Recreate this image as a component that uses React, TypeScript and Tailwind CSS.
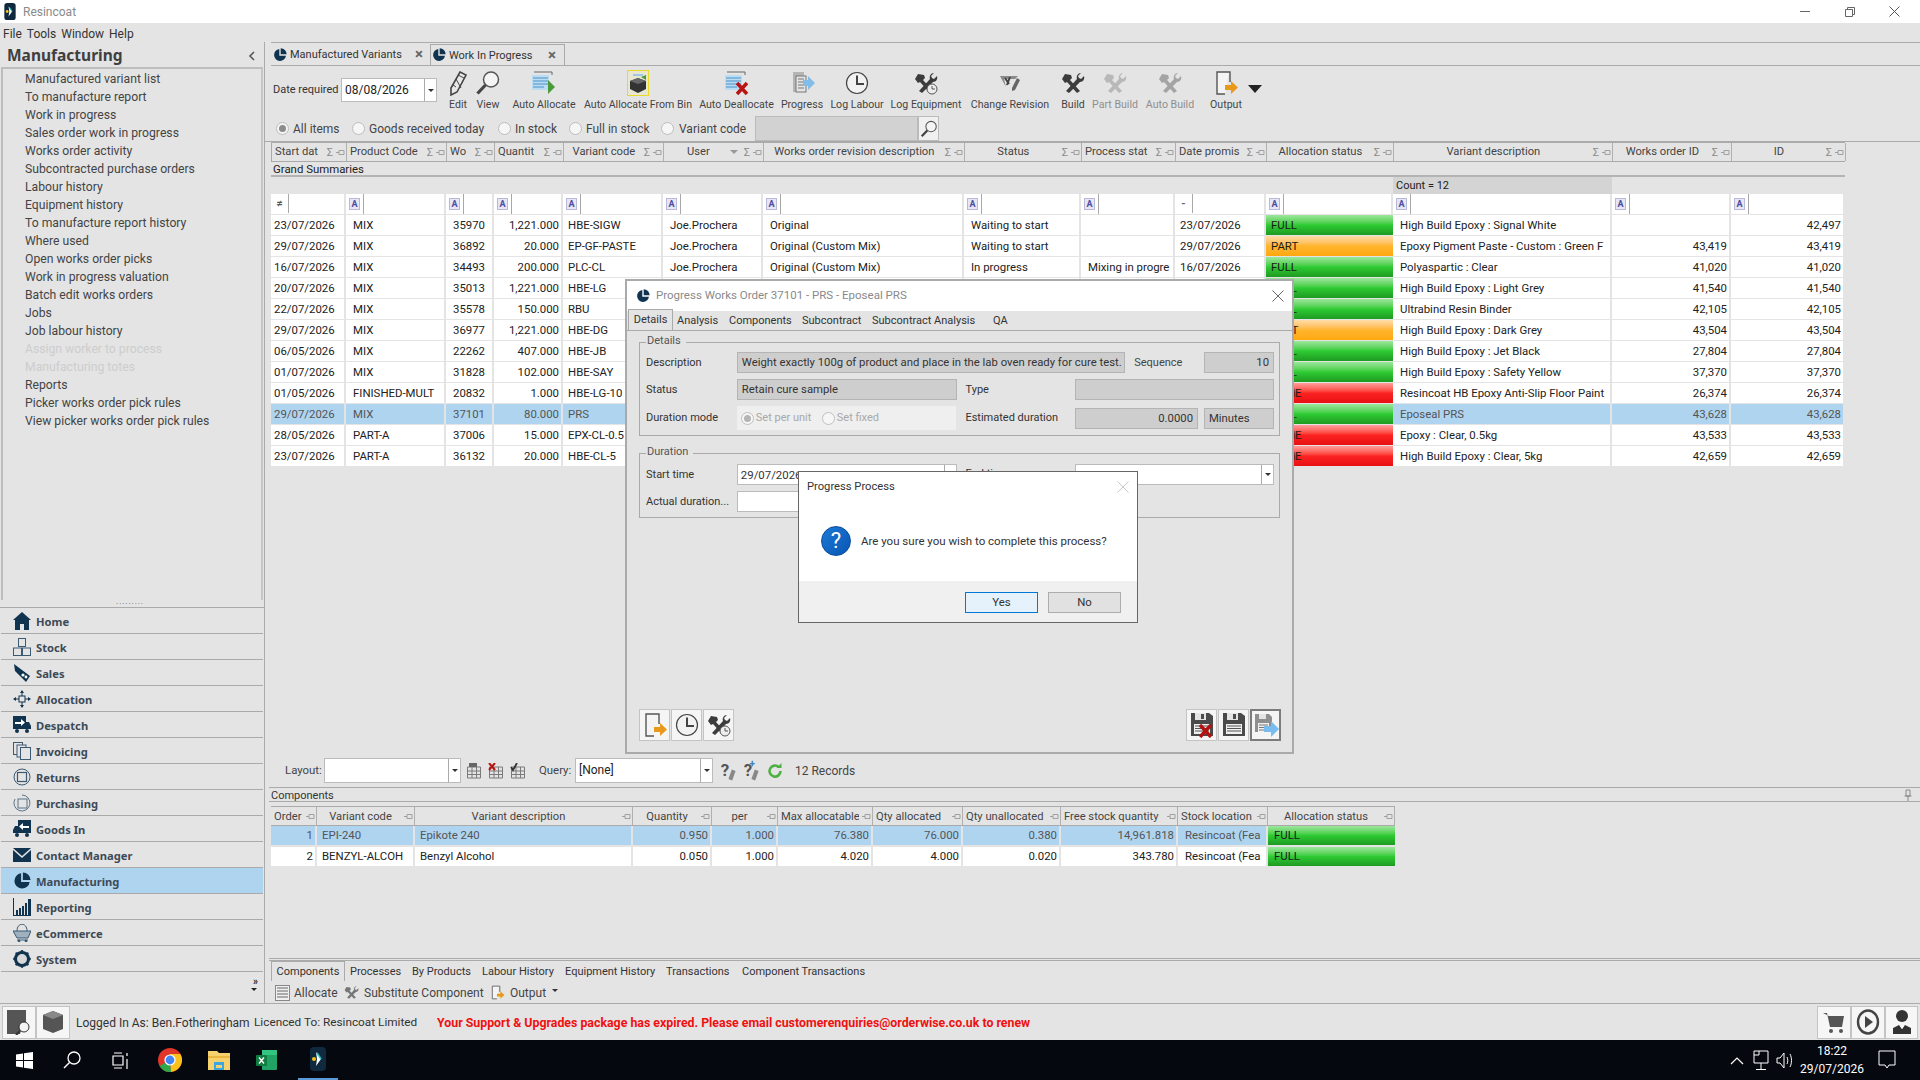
import React from "react";

const NAVY = "#10344f";

const Pie = ({ s = 14 }: { s?: number }) => (
  <svg width={s} height={s} viewBox="0 0 20 20" className="shrink-0">
    <path d="M9 1.5A8.5 8.5 0 1 0 18.5 11H9z" fill={NAVY} />
    <path d="M11 0.5A8.5 8.5 0 0 1 19.5 9H11z" fill={NAVY} />
  </svg>
);

const Sigma = () => <span className="text-[11px] text-[#8a8a8a] leading-none">Σ</span>;
const PinH = () => (
  <svg width="9" height="9" viewBox="0 0 9 9" className="shrink-0">
    <path d="M0 4.5h3M3 2.5h5v4H3z" fill="none" stroke="#a0a0a0" />
  </svg>
);

const FilterA = () => (
  <span className="flex h-[20px] w-[18px] items-center justify-start border-r border-[#a8a8a8] pl-[3px]">
    <span className="flex h-[12px] w-[11px] items-center justify-center border border-[#b8b8d8] bg-[#e6e6f4] text-[9px] font-bold leading-none text-[#4c4ca0]">A</span>
  </span>
);

const HammerWrench = ({ c = "#3c3c3c", s = 24, clock = false }: { c?: string; s?: number; clock?: boolean }) => (
  <svg width={s} height={s} viewBox="0 0 24 24" className="shrink-0">
    <path d="M4 3l6 1 1 3-2 2 10 11-3 2L6 11 4 12 1 8z" fill={c} />
    <path d="M20 2l-3 3 1 2 2 1 3-3c1 3-1 6-4 6L8 22l-3-2L16 8c-1-3 1-6 4-6z" fill={c} />
    {clock && (
      <g>
        <circle cx="18" cy="18" r="5" fill="#eee" stroke="#555" />
        <path d="M18 15v3h3" fill="none" stroke="#555" />
      </g>
    )}
  </svg>
);

const Clock = ({ s = 24 }: { s?: number }) => (
  <svg width={s} height={s} viewBox="0 0 24 24" className="shrink-0">
    <circle cx="12" cy="12" r="10.5" fill="#f2f2f2" stroke="#444" strokeWidth="1.2" />
    <path d="M12 4.5V13h7" fill="none" stroke="#444" strokeWidth="2" />
  </svg>
);

const OutputIcon = ({ s = 26 }: { s?: number }) => (
  <svg width={s} height={s} viewBox="0 0 26 26" className="shrink-0">
    <path d="M16 2H4v22h8" fill="#f4f4f4" stroke="#555" strokeWidth="1.4" />
    <path d="M16 2h1v10" fill="none" stroke="#555" strokeWidth="1.4" />
    <path d="M12 15h6v-4l7 6.5-7 6.5v-4h-6z" fill="#e8991c" />
  </svg>
);

const ListDoc = ({ mark }: { mark: "go" | "x" }) => (
  <svg width="26" height="26" viewBox="0 0 26 26" className="shrink-0">
    <path d="M3 2h18v3" fill="none" stroke="#666" />
    <rect x="1" y="5" width="17" height="15" fill="#bcdcf3" />
    <path d="M2 8h15M2 11h15M2 14h15M2 17h11" stroke="#6fa9d6" strokeWidth="1.3" />
    {mark === "go" ? (
      <path d="M17 10l7 7-7 7z" fill="#4a9a3a" />
    ) : (
      <path d="M13 13l10 11M23 13L13 24" stroke="#b81414" strokeWidth="3.4" />
    )}
  </svg>
);

const Box = () => (
  <span className="flex h-[26px] w-[22px] items-center justify-center border border-[#e9d92b] bg-[#e8e7d2]">
    <svg width="18" height="20" viewBox="0 0 18 20">
      <path d="M9 5l8 3v8l-8 4-8-4V8z" fill="#333" />
      <path d="M9 5l8 3-8 3-8-3z" fill="#666" />
      <path d="M4 1h10v2H4z" fill="#9ec7e6" />
      <path d="M12 4l5-2v5z" fill="#4a9a3a" />
    </svg>
  </span>
);

const ProgressIcon = () => (
  <svg width="26" height="24" viewBox="0 0 26 24" className="shrink-0">
    <path d="M4 1h11v4h-8v16H4z" fill="#b5b5b5" />
    <rect x="7" y="5" width="10" height="16" fill="#e4e4e4" stroke="#777" />
    <path d="M9 8h6M9 11h6M9 14h6M9 17h6" stroke="#777" />
    <path d="M14 9h5V5l7 7-7 7v-4h-5z" fill="#82bdea" />
  </svg>
);

const Pencil = () => (
  <svg width="20" height="26" viewBox="0 0 20 26" className="shrink-0">
    <path d="M12 2l6 3-9 17-6 3 0-7z" fill="#e8e8e8" stroke="#444" strokeWidth="1.6" />
    <path d="M10 5l6 3M8 9l5 9M5 15l3 2" stroke="#444" />
  </svg>
);

const Magnifier = ({ s = 26 }: { s?: number }) => (
  <svg width={s} height={s} viewBox="0 0 26 26" className="shrink-0">
    <circle cx="16" cy="9.5" r="7.5" fill="#f4f4f4" stroke="#555" strokeWidth="1.5" />
    <path d="M10.5 15L2.5 23.5" stroke="#444" strokeWidth="3.2" />
  </svg>
);

const ChangeRev = () => (
  <svg width="24" height="22" viewBox="0 0 24 22" className="shrink-0">
    <path d="M2 4h18l-3 3H6l2 8z" fill="#8a8a8a" />
    <path d="M7 6l4 6M12 5l-3 8" stroke="#444" strokeWidth="2" />
    <path d="M19 6l3 2-5 10-3 1 0-3z" fill="#666" />
  </svg>
);

const Disk = ({ variant }: { variant: "x" | "plain" | "go" }) => (
  <svg width="26" height="26" viewBox="0 0 26 26">
    {variant === "go" ? (
      <g>
        <path d="M2 2h14l3 3v15H2z" fill="#8f8f8f" />
        <rect x="6" y="2" width="7" height="5" fill="#e4e4e4" />
        <rect x="5" y="11" width="11" height="9" fill="#f0f0f0" />
        <path d="M6 13h9M6 15.5h9M6 18h9" stroke="#777" />
        <path d="M11 14h7V9l8 8-8 8v-5h-7z" fill="#79bdf0" />
      </g>
    ) : (
      <g>
        <path d="M2 1h18l4 3v20H2z" fill="#4a4a4a" />
        <rect x="6" y="1" width="11" height="7" fill="#e4e4e4" />
        <rect x="12" y="2" width="3" height="5" fill="#4a4a4a" />
        <rect x="5" y="12" width="16" height="10" fill="#f0f0f0" />
        <path d="M6 14h14M6 16.5h14M6 19h14" stroke="#555" />
        {variant === "x" && <path d="M11 13l11 12M22 13L11 25" stroke="#b31212" strokeWidth="3.4" />}
      </g>
    )}
  </svg>
);

const IconBtn = ({ children, strong }: { children: React.ReactNode; strong?: boolean }) => (
  <span className={`flex h-[32px] w-[31px] items-center justify-center ${strong ? "border-2 border-[#7c7c7c]" : "border border-[#c4c4c4]"} bg-[#f5f5f5]`}>
    {children}
  </span>
);

const Radio = ({ on, dim }: { on?: boolean; dim?: boolean }) => (
  <span className={`flex h-[13px] w-[13px] shrink-0 items-center justify-center rounded-full border ${dim ? "border-[#c0c0c0]" : "border-[#bdbdbd]"} bg-[#f6f6f6]`}>
    {on && <span className={`h-[7px] w-[7px] rounded-full ${dim ? "bg-[#b4b4b4]" : "bg-[#8c8c8c]"}`} />}
  </span>
);

/* ---------- sidebar ---------- */
const sideItems: [string, boolean?][] = [
  ["Manufactured variant list"], ["To manufacture report"], ["Work in progress"], ["Sales order work in progress"],
  ["Works order activity"], ["Subcontracted purchase orders"], ["Labour history"], ["Equipment history"],
  ["To manufacture report history"], ["Where used"], ["Open works order picks"], ["Work in progress valuation"],
  ["Batch edit works orders"], ["Jobs"], ["Job labour history"], ["Assign worker to process", true],
  ["Manufacturing totes", true], ["Reports"], ["Picker works order pick rules"], ["View picker works order pick rules"],
];

const NavGlyph = ({ name }: { name: string }) => {
  const c = NAVY;
  const common = { width: 18, height: 18, viewBox: "0 0 18 18", className: "shrink-0" };
  switch (name) {
    case "Home":
      return <svg {...common}><path d="M9 0l9 8h-2v10h-5v-6H7v6H2V8H0z" fill={c} /></svg>;
    case "Stock":
      return <svg {...common} fill="none" stroke="#3d5a73"><rect x="5.5" y="0.5" width="7" height="8" /><rect x="0.5" y="10" width="8" height="7.5" /><rect x="9.5" y="10" width="8" height="7.5" /></svg>;
    case "Sales":
      return <svg {...common}><path d="M1 0l4 3 12 9-4 6L2 7z" fill={c} /><circle cx="10" cy="11" r="1.6" fill="#fff" /><circle cx="13" cy="13" r="1.4" fill="#fff" /></svg>;
    case "Allocation":
      return <svg {...common}><path d="M9 0l2 3H7zM9 18l-2-3h4zM0 9l3-2v4zM18 9l-3 2V7z" fill={c} /><rect x="6" y="6" width="6" height="6" fill="none" stroke={c} /><path d="M9 3v3M9 12v3M3 9h3M12 9h3" stroke={c} /></svg>;
    case "Despatch":
      return <svg {...common}><path d="M0 0h13v13H0zM13 6h3l2 4v3h-5z" fill={c} /><circle cx="4" cy="15" r="2" fill={c} /><circle cx="14" cy="15" r="2" fill={c} /><path d="M2 6h6V3l4 3.5L8 10V8H2z" fill="#fff" /></svg>;
    case "Invoicing":
      return <svg {...common} fill="#e4e4e4" stroke="#3d5a73"><rect x="0.5" y="0.5" width="9" height="12" /><rect x="4" y="3" width="9" height="12" /><rect x="7.5" y="5.5" width="10" height="12" /></svg>;
    case "Returns":
      return <svg {...common} fill="none" stroke="#3d5a73"><circle cx="9" cy="9" r="8" /><rect x="4.5" y="4.5" width="9" height="9" strokeWidth="1.2" /></svg>;
    case "Purchasing":
      return <svg {...common} fill="none" stroke="#5b7488"><path d="M9 1a8 8 0 1 1-7 4" /><rect x="5" y="5" width="9" height="9" /></svg>;
    case "Goods In":
      return <svg {...common}><path d="M18 0H5v13h13zM5 6H2L0 10v3h5z" fill={c} /><circle cx="4" cy="15" r="2" fill={c} /><circle cx="14" cy="15" r="2" fill={c} /><path d="M16 6h-6V3L6 6.5 10 10V8h6z" fill="#fff" /></svg>;
    case "Contact Manager":
      return <svg {...common}><path d="M0 2h18L9 10z" fill={c} /><path d="M0 4v12h18V4l-9 8z" fill={c} /></svg>;
    case "Manufacturing":
      return <Pie s={18} />;
    case "Reporting":
      return <svg {...common}><path d="M0.5 0v18M0 17.5h18" stroke={c} /><path d="M3 12h2v6H3zM6 10h2v8H6zM9 8h2v10H9zM12 5h2v13h-2zM15 1h3v17h-3z" fill={c} /></svg>;
    case "eCommerce":
      return <svg {...common} fill="none" stroke="#3d5a73"><path d="M0 7h18l-3 7H4z" fill="#9fb0be" /><path d="M4 7c0-9 10-9 10 0M4 16h11" /><circle cx="6" cy="17" r="1" fill={c} /><circle cx="13" cy="17" r="1" fill={c} /></svg>;
    default:
      return <svg {...common}><circle cx="9" cy="9" r="6.5" fill="#d8d8d8" stroke={c} strokeWidth="3" /><circle cx="9" cy="1.5" r="1.4" fill={c} /><circle cx="9" cy="16.5" r="1.4" fill={c} /><circle cx="1.5" cy="9" r="1.4" fill={c} /><circle cx="16.5" cy="9" r="1.4" fill={c} /><circle cx="3.7" cy="3.7" r="1.4" fill={c} /><circle cx="14.3" cy="14.3" r="1.4" fill={c} /><circle cx="14.3" cy="3.7" r="1.4" fill={c} /><circle cx="3.7" cy="14.3" r="1.4" fill={c} /></svg>;
  }
};

const navItems = ["Home", "Stock", "Sales", "Allocation", "Despatch", "Invoicing", "Returns", "Purchasing", "Goods In", "Contact Manager", "Manufacturing", "Reporting", "eCommerce", "System"];

const Sidebar = () => (
  <aside className="flex w-[264px] shrink-0 flex-col">
    <div className="flex h-[25px] items-center justify-between pl-[7px] pr-[8px] pt-[2px] font-['Noto_Sans',sans-serif]">
      <span className="text-[15.5px] font-bold leading-none text-[#3f3f3f]">Manufacturing</span>
      <svg width="8" height="10" viewBox="0 0 8 10"><path d="M6 1L2 5l4 4" fill="none" stroke="#555" strokeWidth="1.6" /></svg>
    </div>
    <div className="ml-[1px] mr-[1px] flex h-[533px] flex-col border-2 border-b-0 border-[#bdbdbd] border-r-[#c6c6c6] pl-[22px] pt-[1px]">
      {sideItems.map(([t, off]) => (
        <div key={t} className={`h-[18px] text-[12.2px] leading-[18px] ${off ? "text-[#cdcdcd]" : "text-[#444]"}`}>{t}</div>
      ))}
    </div>
    <div className="flex h-[8px] items-start justify-center border-b border-t-0 border-[#aaa] pr-[4px] pt-[2px]">
      <span className="text-[8px] leading-[4px] tracking-[1px] text-[#555]">·········</span>
    </div>
    <div className="ml-[1px] w-[262px]">
      {navItems.map((n) => (
        <div key={n} className={`flex h-[26px] items-center gap-[5px] border-b border-[#aaa] pl-[12px] ${n === "Manufacturing" ? "bg-[#afd4f0]" : ""}`}>
          <NavGlyph name={n} />
          <span className="pt-[3px] font-['Noto_Sans',sans-serif] text-[11.2px] font-bold text-[#3d4a57]">{n}</span>
        </div>
      ))}
    </div>
    <div className="flex flex-1 flex-col items-end pr-[6px] pt-[6px]">
      <span className="text-[10px] font-bold leading-[8px] text-[#222]">»</span>
      <span className="mr-[1px] mt-[2px] h-0 w-0 border-x-[3px] border-t-[3px] border-x-transparent border-t-[#222]" />
    </div>
  </aside>
);

/* ---------- main grid ---------- */
const mainCols = "grid-cols-[75px_100px_48px_69px_100px_100px_201px_117px_94px_91px_127px_219px_119px_114px]";
const compCols = "grid-cols-[46px_98px_218px_79px_66px_95px_90px_98px_117px_90px_127px]";

const headers: [string, boolean?, boolean?][] = [
  ["Start dat"], ["Product Code"], ["Wo"], ["Quantit"], ["Variant code", true], ["User", true, true],
  ["Works order revision description", true], ["Status", true], ["Process stat"], ["Date promis"], ["Allocation status", true],
  ["Variant description", true], ["Works order ID", true], ["ID", true],
];

type Row = { d: string; p: string; w: string; q: string; v: string; r: string; s: string; ps: string; dp: string; a: "FULL" | "PART" | "NONE"; vd: string; wo: string; id: string };
const rows: Row[] = [
  { d: "23/07/2026", p: "MIX", w: "35970", q: "1,221.000", v: "HBE-SIGW", r: "Original", s: "Waiting to start", ps: "", dp: "23/07/2026", a: "FULL", vd: "High Build Epoxy : Signal White", wo: "", id: "42,497" },
  { d: "29/07/2026", p: "MIX", w: "36892", q: "20.000", v: "EP-GF-PASTE", r: "Original (Custom Mix)", s: "Waiting to start", ps: "", dp: "29/07/2026", a: "PART", vd: "Epoxy Pigment Paste - Custom : Green F", wo: "43,419", id: "43,419" },
  { d: "16/07/2026", p: "MIX", w: "34493", q: "200.000", v: "PLC-CL", r: "Original (Custom Mix)", s: "In progress", ps: "Mixing in progre", dp: "16/07/2026", a: "FULL", vd: "Polyaspartic : Clear", wo: "41,020", id: "41,020" },
  { d: "20/07/2026", p: "MIX", w: "35013", q: "1,221.000", v: "HBE-LG", r: "Original", s: "Waiting to start", ps: "", dp: "20/07/2026", a: "FULL", vd: "High Build Epoxy : Light Grey", wo: "41,540", id: "41,540" },
  { d: "22/07/2026", p: "MIX", w: "35578", q: "150.000", v: "RBU", r: "Original", s: "Waiting to start", ps: "", dp: "22/07/2026", a: "FULL", vd: "Ultrabind Resin Binder", wo: "42,105", id: "42,105" },
  { d: "29/07/2026", p: "MIX", w: "36977", q: "1,221.000", v: "HBE-DG", r: "Original", s: "Waiting to start", ps: "", dp: "29/07/2026", a: "PART", vd: "High Build Epoxy : Dark Grey", wo: "43,504", id: "43,504" },
  { d: "06/05/2026", p: "MIX", w: "22262", q: "407.000", v: "HBE-JB", r: "Original", s: "Waiting to start", ps: "", dp: "06/05/2026", a: "FULL", vd: "High Build Epoxy : Jet Black", wo: "27,804", id: "27,804" },
  { d: "01/07/2026", p: "MIX", w: "31828", q: "102.000", v: "HBE-SAY", r: "Original", s: "Waiting to start", ps: "", dp: "01/07/2026", a: "FULL", vd: "High Build Epoxy : Safety Yellow", wo: "37,370", id: "37,370" },
  { d: "01/05/2026", p: "FINISHED-MULT", w: "20832", q: "1.000", v: "HBE-LG-10", r: "Original", s: "Waiting to start", ps: "", dp: "01/05/2026", a: "NONE", vd: "Resincoat HB Epoxy Anti-Slip Floor Paint", wo: "26,374", id: "26,374" },
  { d: "29/07/2026", p: "MIX", w: "37101", q: "80.000", v: "PRS", r: "Original", s: "In progress", ps: "", dp: "29/07/2026", a: "FULL", vd: "Eposeal PRS", wo: "43,628", id: "43,628" },
  { d: "28/05/2026", p: "PART-A", w: "37006", q: "15.000", v: "EPX-CL-0.5", r: "Original", s: "Waiting to start", ps: "", dp: "28/05/2026", a: "NONE", vd: "Epoxy : Clear, 0.5kg", wo: "43,533", id: "43,533" },
  { d: "23/07/2026", p: "PART-A", w: "36132", q: "20.000", v: "HBE-CL-5", r: "Original", s: "Waiting to start", ps: "", dp: "23/07/2026", a: "NONE", vd: "High Build Epoxy : Clear, 5kg", wo: "42,659", id: "42,659" },
];

const statusCls: Record<string, string> = {
  FULL: "bg-gradient-to-b from-[#9ce69c] via-[#2ecb33] to-[#1f9a22]",
  PART: "bg-gradient-to-b from-[#ffdca8] via-[#ffb52c] to-[#ffa80e]",
  NONE: "bg-gradient-to-b from-[#ff9c9c] via-[#fb2222] to-[#e81010]",
};

const Cell = ({ children, right, sel, indent, mid }: { children?: React.ReactNode; right?: boolean; sel?: boolean; indent?: boolean; mid?: boolean }) => (
  <div className={`overflow-hidden whitespace-nowrap border-r-2 border-[#e4e4e4] ${right ? "pr-[2px] text-right" : indent ? "pl-[7px]" : mid ? "pl-[5px]" : "pl-[3px]"} ${sel ? "bg-[#afd4f0]" : "bg-white"}`}>{children}</div>
);

const HeadCell = ({ t, center, sort, noSigma }: { t: string; center?: boolean; sort?: boolean; noSigma?: boolean }) => (
  <div className="flex items-center overflow-hidden border-r border-[#b0b0b0] pl-[3px] pr-[1px]">
    <span className={`min-w-0 flex-1 overflow-hidden whitespace-nowrap text-[11.2px] text-[#444] ${center ? "text-center" : ""}`}>{t}</span>
    {sort && <span className="mr-[3px] h-0 w-0 border-x-[4px] border-t-[4px] border-x-transparent border-t-[#999]" />}
    {!noSigma && <span className="ml-[3px]"><Sigma /></span>}
    <span className="ml-[3px]"><PinH /></span>
  </div>
);

const MainGrid = () => (
  <div className="flex w-[1574px] flex-col text-[11.4px] leading-[20px]">
    <div className={`grid h-[20px] ${mainCols} border-y border-[#aaa] border-l`}>
      {headers.map(([t, c, s]) => <HeadCell key={t} t={t} center={c} sort={s} />)}
    </div>
    <div className="flex h-[15px] items-center border-b-2 border-[#b4b4b4] pl-[2px] pt-[1px] leading-[15px] text-[#222]">Grand Summaries</div>
    <div className={`grid h-[17px] ${mainCols} border-b-0`}>
      {headers.map(([t]) => t === "Variant description"
        ? <div key={t} className="bg-[#d4d4d4] pl-[3px] text-[11px] leading-[17px] text-[#222]">Count = 12</div>
        : <div key={t} />)}
    </div>
    <div className={`grid h-[21px] ${mainCols} border-b-2 border-[#e4e4e4]`}>
      {headers.map(([t], i) => (
        <div key={t} className="border-r-2 border-[#e4e4e4] bg-white">
          {i === 0 ? <span className="flex h-[19px] w-[18px] items-center justify-center border-r border-[#a8a8a8] text-[11px] font-bold leading-none text-[#555]">≠</span>
            : i === 9 ? <span className="flex h-[19px] w-[18px] items-center justify-center border-r border-[#a8a8a8] text-[11px] font-bold leading-none text-[#667]">-</span>
            : <FilterA />}
        </div>
      ))}
    </div>
    {rows.map((r, i) => {
      const sel = i === 9;
      return (
        <div key={r.w} className={`grid h-[21px] ${mainCols} border-b-2 border-[#e4e4e4] leading-[20px] ${sel ? "text-[#555]" : "text-[#222]"}`}>
          <Cell sel={sel}>{r.d}</Cell>
          <Cell sel={sel} indent>{r.p}</Cell>
          <Cell sel={sel} indent>{r.w}</Cell>
          <Cell sel={sel} right>{r.q}</Cell>
          <Cell sel={sel} mid>{r.v}</Cell>
          <Cell sel={sel} indent>Joe.Prochera</Cell>
          <Cell sel={sel} indent>{r.r}</Cell>
          <Cell sel={sel} indent>{r.s}</Cell>
          <Cell sel={sel} indent>{r.ps}</Cell>
          <Cell sel={sel} mid>{r.dp}</Cell>
          <div className={`${statusCls[r.a]} pl-[5px] text-[#1b1b1b]`}>{r.a}</div>
          <Cell sel={sel} indent>{r.vd}</Cell>
          <Cell sel={sel} right>{r.wo}</Cell>
          <Cell sel={sel} right>{r.id}</Cell>
        </div>
      );
    })}
  </div>
);

const compHead: [string, boolean?][] = [
  ["Order"], ["Variant code", true], ["Variant description", true], ["Quantity", true], ["per", true], ["Max allocatable"],
  ["Qty allocated"], ["Qty unallocated"], ["Free stock quantity"], ["Stock location"], ["Allocation status", true],
];
const compRows = [
  ["1", "EPI-240", "Epikote 240", "0.950", "1.000", "76.380", "76.000", "0.380", "14,961.818", "Resincoat (Fea"],
  ["2", "BENZYL-ALCOH", "Benzyl Alcohol", "0.050", "1.000", "4.020", "4.000", "0.020", "343.780", "Resincoat (Fea"],
];

const CompGrid = () => (
  <div className="flex w-[1124px] flex-col text-[11.4px] leading-[19px]">
    <div className={`grid h-[20px] ${compCols} border-y border-[#aaa]`}>
      {compHead.map(([t, c]) => <HeadCell key={t} t={t} center={c} noSigma />)}
    </div>
    {compRows.map((r, i) => (
      <div key={r[0]} className={`grid h-[20.5px] ${compCols} border-b-2 border-[#e4e4e4] ${i === 0 ? "text-[#555]" : "text-[#222]"}`}>
        {r.map((v, j) => (
          <Cell key={j} sel={i === 0} right={[0, 3, 4, 5, 6, 7, 8].includes(j)} mid={j === 1 || j === 2} indent={j === 9}>{v}</Cell>
        ))}
        <div className={`${statusCls.FULL} pl-[6px] text-[#1b1b1b]`}>FULL</div>
      </div>
    ))}
  </div>
);

const ToolBtn = ({ w, label, off, className = "", children }: { w: string; label: string; off?: boolean; className?: string; children: React.ReactNode }) => (
  <div className={`flex shrink-0 flex-col items-center ${w} ${className}`}>
    <span className="flex h-[32px] items-center justify-center">{children}</span>
    <span className={`mt-[-2px] whitespace-nowrap text-[10.6px] leading-[16px] ${off ? "text-[#8f8f8f]" : "text-[#444]"}`}>{label}</span>
  </div>
);

const Combo = ({ w, h, value, bg = "bg-white" }: { w: string; h: string; value: string; bg?: string }) => (
  <div className={`flex ${w} ${h} items-stretch border border-[#bbb] ${bg}`}>
    <span className="flex-1 overflow-hidden whitespace-nowrap pl-[3px] text-[12px] leading-[23px] text-[#222]">{value}</span>
    <span className="flex w-[12px] items-center justify-center border-l border-[#aaa] bg-white">
      <span className="h-0 w-0 border-x-[3px] border-t-[3px] border-x-transparent border-t-[#333]" />
    </span>
  </div>
);

const Toolbar = () => (
  <div className="flex h-[50px] items-start pt-[1px]">
    <span className="ml-[2px] mt-[15px] w-[68px] whitespace-nowrap text-[11px] leading-[16px] text-[#333]">Date required</span>
    <div className="mt-[11px]"><Combo w="w-[96px]" h="h-[24px]" value="08/08/2026" /></div>
    <div className="ml-[6px] flex">
      <ToolBtn w="w-[30px]" label="Edit"><Pencil /></ToolBtn>
      <ToolBtn w="w-[30px]" label="View"><Magnifier /></ToolBtn>
      <ToolBtn w="w-[82px]" label="Auto Allocate"><ListDoc mark="go" /></ToolBtn>
      <ToolBtn w="w-[106px]" label="Auto Allocate From Bin"><Box /></ToolBtn>
      <ToolBtn w="w-[91px]" label="Auto Deallocate"><ListDoc mark="x" /></ToolBtn>
      <ToolBtn w="w-[40px]" label="Progress"><ProgressIcon /></ToolBtn>
      <ToolBtn w="w-[70px]" label="Log Labour"><Clock /></ToolBtn>
      <ToolBtn w="w-[68px]" label="Log Equipment"><HammerWrench clock /></ToolBtn>
      <ToolBtn w="w-[100px]" label="Change Revision"><ChangeRev /></ToolBtn>
      <ToolBtn w="w-[26px]" label="Build"><HammerWrench /></ToolBtn>
      <ToolBtn w="w-[58px]" label="Part Build" off><HammerWrench c="#b8b8b8" /></ToolBtn>
      <ToolBtn w="w-[52px]" label="Auto Build" off><HammerWrench c="#a4a4a4" /></ToolBtn>
      <ToolBtn w="w-[40px]" label="Output" className="ml-[10px]"><OutputIcon /></ToolBtn>
      <span className="ml-[2px] mt-[18px] h-0 w-0 border-x-[7px] border-t-[8px] border-x-transparent border-t-[#222]" />
    </div>
  </div>
);

const RadioRow = () => (
  <div className="flex h-[25px] items-center text-[12px] text-[#444]">
    <div className="ml-[5px] flex w-[76px] items-center gap-[4px]"><Radio on />All items</div>
    <div className="flex w-[146px] items-center gap-[4px]"><Radio />Goods received today</div>
    <div className="flex w-[71px] items-center gap-[4px]"><Radio />In stock</div>
    <div className="flex w-[92px] items-center gap-[4px]"><Radio />Full in stock</div>
    <div className="flex w-[94px] items-center gap-[5px]"><Radio />Variant code</div>
    <div className="h-[25px] w-[163px] border border-[#bbb] bg-[#d2d2d2]" />
    <div className="flex h-[25px] w-[21px] items-center justify-center border border-[#bbb] bg-[#f0f0f0]"><Magnifier s={18} /></div>
  </div>
);

const GridToolIcon = ({ mark }: { mark: string }) => (
  <svg width="16" height="16" viewBox="0 0 16 16" className="shrink-0">
    <path d="M1.5 4h13v11h-13zM1.5 8h13M1.5 11.5h13M6 4v11M10.5 4v11" fill="none" stroke="#7a7a7a" />
    {mark === "x" && <path d="M1 0l6 7M7 0L1 7" stroke="#b81414" strokeWidth="2" />}
    {mark === "check" && <path d="M1 4l2 3 4-7" stroke="#333" strokeWidth="1.8" fill="none" />}
    {mark === "save" && <rect x="3" y="0" width="8" height="4" fill="#666" />}
  </svg>
);

const QueryIcon = ({ plus }: { plus?: boolean }) => (
  <span className="relative flex h-[18px] w-[14px] items-center justify-center text-[17px] font-bold leading-none text-[#555]">
    ?
    {plus && <span className="absolute -top-[3px] right-0 text-[10px] text-[#3d80c0]">+</span>}
    <span className="absolute bottom-0 right-[-2px] h-[10px] w-[4px] rotate-[20deg] bg-[#888]" />
  </span>
);

const LayoutBar = () => (
  <div className="flex h-[33px] items-center text-[12px] text-[#444]">
    <span className="ml-[14px] w-[39px] text-[11.4px]">Layout:</span>
    <Combo w="w-[137px]" h="h-[25px]" value="" />
    <div className="ml-[5px] flex w-[73px] gap-[6px]">
      <GridToolIcon mark="save" /><GridToolIcon mark="x" /><GridToolIcon mark="check" />
    </div>
    <span className="w-[36px] text-[11.4px]">Query:</span>
    <Combo w="w-[138px]" h="h-[25px]" value="[None]" />
    <div className="ml-[5px] flex w-[46px] gap-[9px]"><QueryIcon /><QueryIcon plus /></div>
    <svg width="16" height="16" viewBox="0 0 16 16" className="ml-[3px] shrink-0">
      <path d="M13.5 8a5.5 5.5 0 1 1-1.8-4" fill="none" stroke="#4fb043" strokeWidth="2.6" />
      <path d="M9.5 5h5V0z" fill="#4fb043" />
    </svg>
    <span className="ml-[12px] whitespace-nowrap">12 Records</span>
  </div>
);

const BottomTabs = () => (
  <div className="flex h-[20px] items-end text-[11px] text-[#333]">
    <span className="ml-[0px] flex h-[20px] w-[74px] items-center justify-center border border-b-0 border-[#aaa] pt-[1px]">Components</span>
    <div className="ml-[5px] flex">
      {[["Processes", "w-[62px]"], ["By Products", "w-[70px]"], ["Labour History", "w-[83px]"], ["Equipment History", "w-[101px]"], ["Transactions", "w-[76px]"], ["Component Transactions", "w-[140px]"]].map(([t, w]) => (
        <span key={t} className={`h-[20px] whitespace-nowrap leading-[21px] ${w}`}>{t}</span>
      ))}
    </div>
  </div>
);

const ActionRow = () => (
  <div className="flex h-[22px] items-center pl-[4px] pt-[1px] text-[12px] text-[#444]">
    <svg width="15" height="16" viewBox="0 0 15 16"><rect x="0.5" y="0.5" width="14" height="15" fill="#f0f0f0" stroke="#888" /><path d="M2 3h11M2 6h11M2 9h11M2 12h11" stroke="#666" /></svg>
    <span className="ml-[4px] w-[50px]">Allocate</span>
    <HammerWrench c="#777" s={15} />
    <span className="ml-[5px] w-[126px] whitespace-nowrap">Substitute Component</span>
    <OutputIcon s={15} />
    <span className="ml-[5px] w-[42px]">Output</span>
    <span className="mt-[-4px] h-0 w-0 border-x-[3px] border-t-[3px] border-x-transparent border-t-[#333]" />
  </div>
);

const Main = () => (
  <main className="flex min-w-0 flex-1 flex-col border-l border-[#aaa] pl-[6px]">
    <div className="flex h-[24px] items-end border-b border-t border-[#aaa] pl-[1px] text-[11px] text-[#333]">
      <div className="flex h-[21px] w-[158px] items-center pl-[1px]">
        <Pie /><span className="ml-[3px] w-[125px] whitespace-nowrap pt-[2px]">Manufactured Variants</span>
        <span className="text-[15px] font-bold leading-none text-[#666]">×</span>
      </div>
      <div className="flex h-[21px] w-[135px] items-center border border-b-0 border-[#aaa] pl-[1px]">
        <Pie /><span className="ml-[3px] w-[99px] whitespace-nowrap pt-[2px]">Work In Progress</span>
        <span className="text-[15px] font-bold leading-none text-[#666]">×</span>
      </div>
    </div>
    <div className="-ml-[6px] border-b border-[#aaa] pl-[6px]">
      <Toolbar />
      <RadioRow />
    </div>
    <div className="h-[612px] overflow-hidden">
      <MainGrid />
    </div>
    <LayoutBar />
    <div className="-ml-[2px] flex h-[15px] items-center justify-between border-y border-[#aaa] pl-[2px] text-[11px] text-[#333]">
      <span className="pt-[1px] leading-[13px]">Components</span>
      <svg width="8" height="12" viewBox="0 0 8 12" className="mr-[8px]"><path d="M2 1h4v6H2zM0.5 7h7M4 7v5" fill="none" stroke="#888" /></svg>
    </div>
    <div className="mt-[4px] h-[152px] overflow-hidden"><CompGrid /></div>
    <div className="-ml-[2px] h-[3px] border-y border-[#aaa]" />
    <BottomTabs />
    <ActionRow />
  </main>
);

/* ---------- status + taskbar ---------- */
const StatusBar = () => (
  <div className="flex h-[37px] items-center border-t border-[#aaa] pl-[2px] text-[12px]">
    <span className="flex h-[33px] w-[34px] items-center justify-center border border-[#c4c4c4] bg-[#f6f6f6]">
      <svg width="26" height="26" viewBox="0 0 26 26"><path d="M1 1h19v13l-4 3-2 8H1z" fill="#555" /><circle cx="18" cy="18" r="5" fill="#f4f4f4" stroke="#333" /><path d="M14 22l-4 4" stroke="#333" strokeWidth="2" /></svg>
    </span>
    <span className="flex h-[33px] w-[34px] items-center justify-center border border-[#c4c4c4] bg-[#f6f6f6]">
      <svg width="24" height="24" viewBox="0 0 24 24"><path d="M12 1l10 4v14l-10 4-10-4V5z" fill="#555" /><path d="M12 1l10 4-10 4L2 5z" fill="#888" /></svg>
    </span>
    <span className="ml-[6px] w-[178px] whitespace-nowrap pt-[2px] text-[#333]">Logged In As: Ben.Fotheringham</span>
    <span className="w-[183px] whitespace-nowrap pt-[2px] text-[11.8px] text-[#333]">Licenced To: Resincoat Limited</span>
    <span className="whitespace-nowrap pt-[2px] text-[12.35px] font-bold text-[#ee1111]">Your Support &amp; Upgrades package has expired. Please email customerenquiries@orderwise.co.uk to renew</span>
    <div className="ml-auto mr-[2px] flex">
      <span className="flex h-[33px] w-[34px] items-center justify-center border border-[#c4c4c4] bg-[#f6f6f6]">
        <svg width="24" height="24" viewBox="0 0 24 24"><path d="M1 3h4l3 14h12l2-11H7" fill="#555" /><circle cx="9" cy="21" r="2" fill="#555" /><circle cx="19" cy="21" r="2" fill="#555" /></svg>
      </span>
      <span className="flex h-[33px] w-[34px] items-center justify-center border border-[#c4c4c4] bg-[#f6f6f6]">
        <svg width="24" height="26" viewBox="0 0 24 26"><ellipse cx="12" cy="13" rx="10" ry="11.5" fill="none" stroke="#444" strokeWidth="2.4" /><path d="M9 7l8 6-8 6z" fill="#444" /></svg>
      </span>
      <span className="flex h-[33px] w-[33px] items-center justify-center border border-[#c4c4c4] bg-[#f6f6f6]">
        <svg width="20" height="26" viewBox="0 0 20 26"><circle cx="10" cy="7" r="6" fill="#333" /><path d="M1 25v-6l6-3 3 4 3-4 6 3v6z" fill="#333" /><path d="M8 17l2 3 2-3z" fill="#fff" /></svg>
      </span>
    </div>
  </div>
);

const Taskbar = () => (
  <div className="flex h-[40px] items-center bg-[#05080e] text-white">
    <span className="flex w-[48px] justify-center">
      <svg width="17" height="17" viewBox="0 0 17 17"><path d="M0 2.5l7-1v6.5H0zM8 1.3L17 0v8H8zM0 9h7v6.5l-7-1zM8 9h9v8l-9-1.3z" fill="#fff" /></svg>
    </span>
    <span className="flex w-[48px] justify-center">
      <svg width="18" height="18" viewBox="0 0 18 18"><circle cx="11" cy="7" r="6" fill="none" stroke="#fff" strokeWidth="1.3" /><path d="M6.5 11.5L1 17" stroke="#fff" strokeWidth="1.5" /></svg>
    </span>
    <span className="flex w-[48px] justify-center">
      <svg width="17" height="17" viewBox="0 0 17 17" fill="none" stroke="#fff" strokeWidth="1.2"><path d="M1 4h10v9H1zM2 1h8M2 16h8M15 1v3M15 7v10" /></svg>
    </span>
    <span className="flex w-[51px] justify-center">
      <svg width="24" height="24" viewBox="0 0 24 24">
        <circle cx="12" cy="12" r="12" fill="#e0352b" />
        <path d="M12 12L1.6 18A12 12 0 0 0 13 24z" fill="#2da84a" />
        <path d="M12 6h10.4A12 12 0 0 1 13 24z" fill="#fbc11a" />
        <circle cx="12" cy="12" r="5.6" fill="#fff" />
        <circle cx="12" cy="12" r="4.4" fill="#4285f4" />
      </svg>
    </span>
    <span className="flex w-[47px] justify-center">
      <svg width="22" height="19" viewBox="0 0 22 19"><path d="M0 0h9l2 2h11v17H0z" fill="#f5d26d" /><path d="M0 5h22v2H0z" fill="#e7b73f" /><path d="M6 11h10v8H6z" fill="#3aa6e4" /><path d="M8 14h6v3H8z" fill="#f5d26d" /></svg>
    </span>
    <span className="flex w-[50px] justify-center">
      <svg width="22" height="22" viewBox="0 0 22 22"><rect x="6" y="1" width="15" height="20" rx="1" fill="#21a366" /><rect x="6" y="1" width="15" height="5" fill="#33c481" /><rect x="0" y="6" width="11" height="11" rx="1" fill="#107c41" /><path d="M3 8.5l5 6M8 8.5l-5 6" stroke="#fff" strokeWidth="1.4" /></svg>
    </span>
    <span className="ml-[6px] flex h-[40px] w-[40px] items-center justify-center border-b-2 border-[#5a9ad8]">
      <svg width="16" height="24" viewBox="0 0 16 24"><rect width="16" height="24" rx="4" fill="#10293f" /><path d="M6 5l5 7-5 7 1-7z" fill="#fff" /><path d="M11 12L7 6" stroke="#27c4c4" strokeWidth="1.5" /><circle cx="4" cy="12" r="2" fill="#f5c518" /></svg>
    </span>
    <div className="ml-auto flex items-center">
      <svg width="14" height="9" viewBox="0 0 14 9" className="mr-[9px]"><path d="M1 8l6-6 6 6" fill="none" stroke="#fff" strokeWidth="1.2" /></svg>
      <svg width="16" height="21" viewBox="0 0 16 21" fill="none" stroke="#fff" className="mr-[7px]"><path d="M1 1h14v12H1zM8 13v6M3 19.5h10M1 5h5V1" /></svg>
      <svg width="17" height="19" viewBox="0 0 17 19" fill="none" stroke="#fff" className="mr-[5px]"><path d="M1 7h3l4-5v15l-4-5H1zM11 6c1 2 1 5 0 7M14 3c2 4 2 9 0 13" /></svg>
      <div className="flex w-[68px] flex-col items-center text-[12px] leading-[18px]"><span>18:22</span><span>29/07/2026</span></div>
      <svg width="18" height="20" viewBox="0 0 18 20" fill="none" stroke="#fff" className="ml-[12px] mr-[24px]"><path d="M1 1h16v14h-6l-2 3-2-3H1z" /></svg>
    </div>
  </div>
);

/* ---------- dialogs ---------- */
const Field = ({ w, children, right }: { w: string; children?: React.ReactNode; right?: boolean }) => (
  <div className={`h-[21px] ${w} overflow-hidden whitespace-nowrap border border-[#b4b4b4] bg-[#cecece] px-[4px] text-[11.3px] leading-[20px] text-[#333] ${right ? "text-right" : ""}`}>{children}</div>
);

const Legend = ({ t }: { t: string }) => (
  <span className="absolute -top-[10px] left-[6px] bg-[#e4e4e4] pl-[1px] pr-[5px] text-[11px] leading-[16px] text-[#555]">{t}</span>
);

const ProgressDialog = () => (
  <div className="absolute left-[625px] top-[279px] flex h-[475px] w-[669px] flex-col border-2 border-[#aaa] border-t-[#aaa] bg-[#e4e4e4] text-[11px]">
    <div className="flex h-[30px] items-center justify-between bg-white pl-[9px] pr-[8px]">
      <div className="flex items-center gap-[6px]"><Pie /><span className="text-[11.5px] text-[#8a8a8a]">Progress Works Order 37101 - PRS - Eposeal PRS</span></div>
      <svg width="12" height="12" viewBox="0 0 12 12"><path d="M0.5 0.5l11 11M11.5 0.5l-11 11" stroke="#666" /></svg>
    </div>
    <div className="flex h-[20px] items-end border-b border-[#aaa] pl-[1px] text-[#333]">
      <span className="flex h-[21px] w-[45px] items-center justify-center border border-b-0 border-[#aaa] bg-[#e4e4e4] pt-[1px]">Details</span>
      <span className="ml-[4px] h-[20px] w-[52px] leading-[21px]">Analysis</span>
      <span className="h-[20px] w-[73px] leading-[21px]">Components</span>
      <span className="h-[20px] w-[70px] leading-[21px]">Subcontract</span>
      <span className="h-[20px] w-[121px] whitespace-nowrap leading-[21px]">Subcontract Analysis</span>
      <span className="h-[20px] leading-[21px]">QA</span>
    </div>
    <div className="relative mx-[12px] mt-[11px] flex h-[94px] flex-col gap-[6px] border border-[#aaa] pl-[6px] pr-[5px] pt-[9px] text-[#333]">
      <Legend t="Details" />
      <div className="flex items-center">
        <span className="w-[91px] pt-[1px]">Description</span>
        <Field w="w-[389px]">Weight exactly 100g of product and place in the lab oven ready for cure test.</Field>
        <span className="ml-[9px] w-[70px] pt-[1px] text-[#444]">Sequence</span>
        <Field w="w-[70px]" right>10</Field>
      </div>
      <div className="flex items-center">
        <span className="w-[91px] pt-[1px]">Status</span>
        <Field w="w-[220px]">Retain cure sample</Field>
        <span className="ml-[9px] w-[110px] pt-[1px]">Type</span>
        <Field w="w-[199px]" />
      </div>
      <div className="flex items-center">
        <span className="w-[91px] pt-[1px]">Duration mode</span>
        <div className="flex h-[24px] w-[220px] items-center bg-[#efefef] pl-[4px] text-[#a8a8a8]">
          <Radio on dim /><span className="ml-[2px] w-[62px] whitespace-nowrap">Set per unit</span><span className="ml-[4px]"><Radio dim /></span><span className="ml-[2px]">Set fixed</span>
        </div>
        <span className="ml-[9px] w-[110px] pt-[1px]">Estimated duration</span>
        <Field w="w-[123px]" right>0.0000</Field>
        <span className="ml-[6px]"><Field w="w-[70px]">Minutes</Field></span>
      </div>
    </div>
    <div className="relative mx-[12px] mt-[17px] flex h-[65px] flex-col gap-[6px] border border-[#aaa] pl-[6px] pr-[5px] pt-[10px] text-[#333]">
      <Legend t="Duration" />
      <div className="flex items-center">
        <span className="w-[91px] pt-[1px]">Start time</span>
        <div className="flex h-[21px] w-[220px] border border-[#bbb] bg-white">
          <span className="flex-1 pl-[3px] text-[11.4px] leading-[20px]">29/07/2026 18:22</span>
          <span className="w-[12px] border-l border-[#aaa]" />
        </div>
        <span className="ml-[9px] w-[110px]">End time</span>
        <div className="flex h-[21px] w-[199px] border border-[#bbb] bg-white">
          <span className="flex-1" />
          <span className="flex w-[12px] items-center justify-center border-l border-[#aaa]"><span className="h-0 w-0 border-x-[3px] border-t-[3px] border-x-transparent border-t-[#333]" /></span>
        </div>
      </div>
      <div className="flex items-center">
        <span className="w-[91px] whitespace-nowrap pt-[1px]">Actual duration...</span>
        <div className="h-[21px] w-[100px] border border-[#bbb] bg-white" />
      </div>
    </div>
    <div className="mt-auto mb-[11px] flex justify-between pl-[12px] pr-[11px]">
      <div className="flex gap-[1px]">
        <IconBtn><OutputIcon /></IconBtn>
        <IconBtn><Clock /></IconBtn>
        <IconBtn><HammerWrench clock /></IconBtn>
      </div>
      <div className="flex gap-[1px]">
        <IconBtn><Disk variant="x" /></IconBtn>
        <IconBtn><Disk variant="plain" /></IconBtn>
        <IconBtn strong><Disk variant="go" /></IconBtn>
      </div>
    </div>
  </div>
);

const ConfirmDialog = () => (
  <div className="absolute left-[798px] top-[471px] flex h-[152px] w-[340px] flex-col border border-[#666] bg-white text-[11.5px] text-[#333]">
    <div className="flex h-[30px] items-center justify-between pl-[8px] pr-[8px] pt-0">
      <span className="text-[11.2px]">Progress Process</span>
      <svg width="12" height="12" viewBox="0 0 12 12"><path d="M0.5 0.5l11 11M11.5 0.5l-11 11" stroke="#c8c8c8" /></svg>
    </div>
    <div className="flex flex-1 items-center pb-[1px] pl-[22px]">
      <span className="flex h-[30px] w-[30px] shrink-0 items-center justify-center rounded-full border border-[#0a4a9c] bg-gradient-to-br from-[#1c7ad6] to-[#0a56b4] text-[22px] leading-none text-white">?</span>
      <span className="ml-[10px] whitespace-nowrap pt-[1px]">Are you sure you wish to complete this process?</span>
    </div>
    <div className="flex h-[41px] items-start justify-end gap-[10px] bg-[#f0f0f0] pr-[16px] pt-[11px]">
      <button className="h-[21px] w-[73px] border border-[#0078d7] bg-[#e5f1fb] text-[11.4px] text-[#333]">Yes</button>
      <button className="h-[21px] w-[73px] border border-[#adadad] bg-[#e1e1e1] text-[11.4px] text-[#333]">No</button>
    </div>
  </div>
);

export default function App() {
  return (
    <div className="relative flex h-[1080px] w-[1920px] flex-col overflow-hidden bg-[#e4e4e4] font-['Roboto',sans-serif]">
      <div className="flex h-[23px] items-center justify-between bg-white pl-[2px]">
        <div className="flex items-center gap-[5px]">
          <svg width="16" height="17" viewBox="0 0 16 24"><rect width="16" height="24" rx="4" fill="#10293f" /><path d="M6 5l5 7-5 7 1-7z" fill="#fff" /><path d="M11 12L7 6" stroke="#27c4c4" strokeWidth="1.5" /><circle cx="4" cy="12" r="2" fill="#f5c518" /></svg>
          <span className="text-[12px] text-[#8a8a8a]">Resincoat</span>
        </div>
        <div className="flex items-center pr-[3px]">
          <span className="flex h-[23px] w-[45px] items-center justify-center"><span className="h-px w-[10px] bg-[#666]" /></span>
          <span className="flex h-[23px] w-[45px] items-center justify-center">
            <svg width="10" height="10" viewBox="0 0 10 10" fill="none" stroke="#666"><path d="M0.5 2.5h7v7h-7zM2.5 2.5v-2h7v7h-2" /></svg>
          </span>
          <span className="flex h-[23px] w-[45px] items-center justify-center">
            <svg width="11" height="11" viewBox="0 0 11 11"><path d="M0.5 0.5l10 10M10.5 0.5l-10 10" stroke="#555" /></svg>
          </span>
        </div>
      </div>
      <div className="flex h-[19px] items-center gap-[5px] pl-[3px] pt-[2px] text-[12px] text-[#333]">
        <span>File</span><span>Tools</span><span>Window</span><span>Help</span>
      </div>
      <div className="flex min-h-0 flex-1">
        <Sidebar />
        <Main />
      </div>
      <StatusBar />
      <Taskbar />
      <ProgressDialog />
      <ConfirmDialog />
    </div>
  );
}
